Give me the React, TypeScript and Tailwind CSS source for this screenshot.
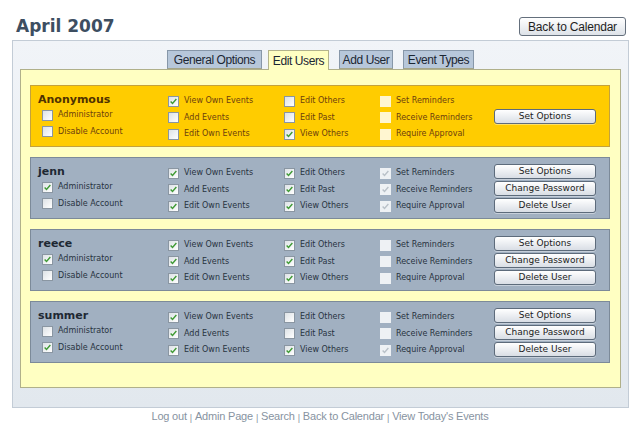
import React from "react";

type Row = { label: string; checked: boolean };
type User = {
  name: string;
  anon?: boolean;
  admin: boolean;
  disabled: boolean;
  c2: boolean[];
  c3: boolean[];
  c4: boolean[];
};

const users: User[] = [
  { name: "Anonymous", anon: true, admin: false, disabled: false, c2: [true, false, false], c3: [false, false, true], c4: [false, false, false] },
  { name: "jenn", admin: true, disabled: false, c2: [true, true, true], c3: [true, true, true], c4: [true, true, true] },
  { name: "reece", admin: true, disabled: false, c2: [true, true, true], c3: [true, true, true], c4: [false, false, false] },
  { name: "summer", admin: false, disabled: true, c2: [true, true, true], c3: [false, false, true], c4: [false, false, true] },
];

const col2 = ["View Own Events", "Add Events", "Edit Own Events"];
const col3 = ["Edit Others", "Edit Past", "View Others"];
const col4 = ["Set Reminders", "Receive Reminders", "Require Approval"];

const font = { fontFamily: '"DejaVu Sans", Verdana, sans-serif' };
const arial = { fontFamily: '"Liberation Sans", Arial, sans-serif' };

function Box({ checked, disabled }: { checked: boolean; disabled?: boolean }) {
  return (
    <span
      className={
        disabled
          ? "w-[11px] h-[11px] shrink-0 flex items-center justify-center bg-[rgba(255,255,255,0.82)]"
          : "w-[11px] h-[11px] shrink-0 flex items-center justify-center border border-[#8a96a2] bg-gradient-to-br from-[#dde2e6] to-white"
      }
    >
      {checked && (
        <svg viewBox="0 0 11 11" className="w-[9px] h-[9px]">
          <path
            d="M2 5.5 L4.3 8 L9 2.5"
            stroke={disabled ? "#b9c1c8" : "#3f9a35"}
            strokeWidth="1.7"
            fill="none"
          />
        </svg>
      )}
    </span>
  );
}

function CheckRow({ label, checked, disabled, color, indent }: Row & { disabled?: boolean; color: string; indent?: boolean }) {
  return (
    <div className={"flex items-center h-[16.5px] " + (indent ? "pl-[4px]" : "")}>
      <Box checked={checked} disabled={disabled} />
      <span className="ml-[5px] text-[8px] leading-[10px] whitespace-nowrap" style={{ color }}>
        {label}
      </span>
    </div>
  );
}

function SmallButton({ children }: { children: React.ReactNode }) {
  return (
    <div className="w-[102px] h-[15px] border border-[#5d6b7b] rounded-[3px] bg-gradient-to-b from-white to-[#d9dee5] flex items-center justify-center text-[9px] leading-[10px] text-[#1c1c1c] shadow-[0_1px_0_rgba(255,255,255,0.4)]">
      {children}
    </div>
  );
}

function Card({ u }: { u: User }) {
  const label = u.anon ? "#6d3f0e" : "#28333f";
  const nameColor = u.anon ? "#4f3200" : "#1e2833";
  return (
    <div
      className={
        "w-[580px] h-[62px] flex border " +
        (u.anon
          ? "bg-[#ffcc00] border-[#c3a23c]"
          : "bg-[#a1b0c1] border-[#7c8a99]")
      }
    >
      <div className="w-[137px] pl-[7px] pt-[7px] flex flex-col">
        <div className="h-[14px] text-[11px] font-bold leading-[14px]" style={{ color: nameColor }}>
          {u.name}
        </div>
        <CheckRow label="Administrator" checked={u.admin} color={label} indent />
        <CheckRow label="Disable Account" checked={u.disabled} color={label} indent />
      </div>
      <div className="w-[116px] pt-[7px] flex flex-col">
        {col2.map((l, i) => (
          <CheckRow key={l} label={l} checked={u.c2[i]} color={label} />
        ))}
      </div>
      <div className="w-[96px] pt-[7px] flex flex-col">
        {col3.map((l, i) => (
          <CheckRow key={l} label={l} checked={u.c3[i]} color={label} />
        ))}
      </div>
      <div className="w-[114px] pt-[7px] flex flex-col">
        {col4.map((l, i) => (
          <CheckRow key={l} label={l} checked={u.c4[i]} color={label} disabled />
        ))}
      </div>
      <div className="flex flex-col justify-center gap-[2px]">
        <SmallButton>Set Options</SmallButton>
        {!u.anon && <SmallButton>Change Password</SmallButton>}
        {!u.anon && <SmallButton>Delete User</SmallButton>}
      </div>
    </div>
  );
}

function Tab({ children, active, w, ml }: { children: React.ReactNode; active?: boolean; w: string; ml: string }) {
  return (
    <div
      className={
        w +
        " " +
        ml +
        " flex items-center justify-center text-[12px] tracking-[-0.4px] " +
        (active
          ? "h-[20px] -mb-px relative z-10 bg-[#ffffc2] border border-b-0 border-[#b3b38c] text-[#1b2633]"
          : "h-[19px] bg-[#b7c7da] border border-[#8797a9] border-b-[#a4a488] text-[#1b2633]")
      }
      style={arial}
    >
      {children}
    </div>
  );
}

export default function App() {
  return (
    <div className="w-[640px] h-[433px] bg-white overflow-hidden" style={font}>
      <div className="h-[40px] flex items-start justify-between pl-[16px] pr-[14px] pt-[16px]">
        <h1 className="text-[17px] font-bold leading-[20px] text-[#3d4e61]">April 2007</h1>
        <div
          className="mt-[1px] h-[19px] w-[107px] border border-[#646f7c] rounded-[3px] bg-gradient-to-b from-white to-[#dde2e8] flex items-center justify-center text-[12px] tracking-[-0.2px] text-[#1e1e1e]"
          style={arial}
        >
          Back to Calendar
        </div>
      </div>
      <div className="ml-[12px] w-[617px] h-[368px] border border-[#c3ccd6] bg-gradient-to-b from-[#f1f4f8] to-[#e2e8ee] pt-[9px]">
        <div className="flex items-end pl-[154px]">
          <Tab w="w-[95px]" ml="ml-0">General Options</Tab>
          <Tab w="w-[61px]" ml="ml-[6px]" active>Edit Users</Tab>
          <Tab w="w-[54px]" ml="ml-[10px]">Add User</Tab>
          <Tab w="w-[71px]" ml="ml-[10px]">Event Types</Tab>
        </div>
        <div className="ml-[7px] w-[601px] h-[319px] bg-[#ffffc2] border border-[#b0b08a] pl-[9px] pt-[15px] flex flex-col gap-[10px]">
          {users.map((u) => (
            <Card key={u.name} u={u} />
          ))}
        </div>
      </div>
      <div className="pt-[1px] flex justify-center text-[11px] leading-[14px] text-[#8793a1] tracking-[-0.2px]" style={arial}>
        <span>Log out</span>
        <span className="mx-[3px] text-[9px] mt-[2px]">|</span>
        <span>Admin Page</span>
        <span className="mx-[3px] text-[9px] mt-[2px]">|</span>
        <span>Search</span>
        <span className="mx-[3px] text-[9px] mt-[2px]">|</span>
        <span>Back to Calendar</span>
        <span className="mx-[3px] text-[9px] mt-[2px]">|</span>
        <span>View Today's Events</span>
      </div>
    </div>
  );
}
